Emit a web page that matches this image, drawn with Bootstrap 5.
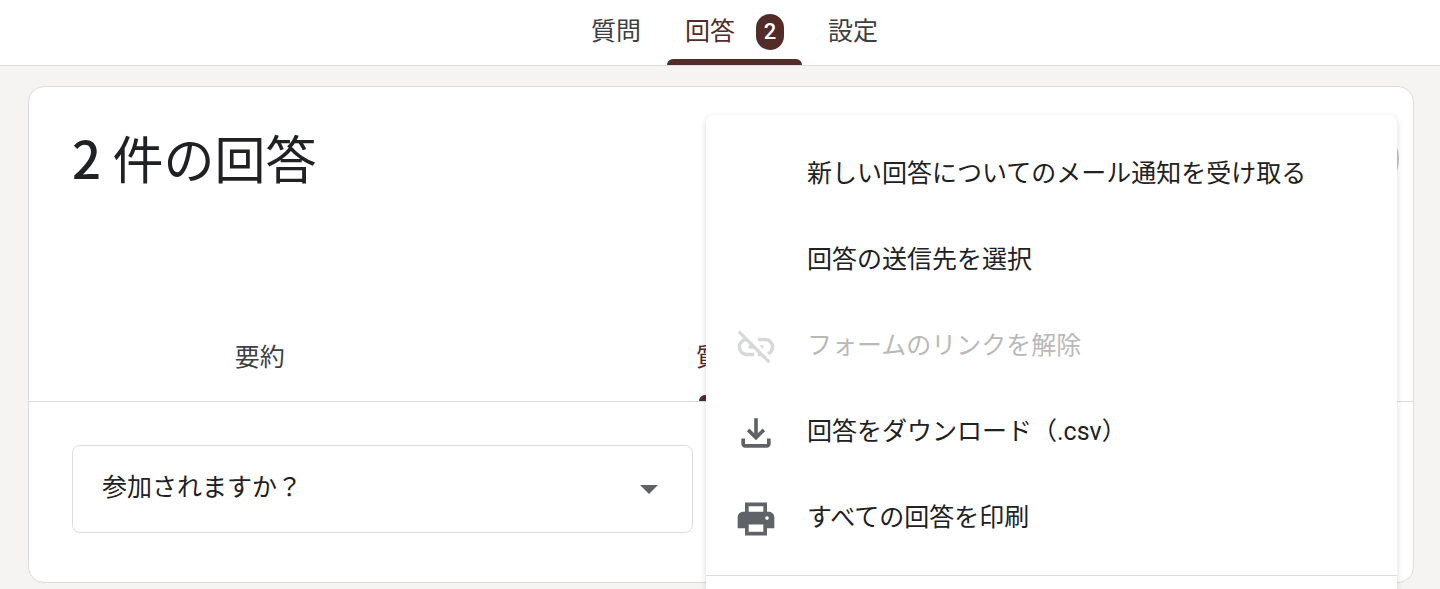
<!DOCTYPE html>
<html lang="ja">
<head>
<meta charset="utf-8">
<meta name="viewport" content="width=device-width, initial-scale=1">
<title>回答</title>
<link href="https://cdn.jsdelivr.net/npm/bootstrap@5.3.0/dist/css/bootstrap.min.css" rel="stylesheet">
<style>
  body { font-family: Roboto, "Noto Sans CJK JP", sans-serif; font-size: 25px; line-height: 36px; color: #202124; background: #f5f4f2; }
  .top-bar { background: #fff; border-bottom: 1px solid #dadce0; padding-left: 29px; }
  .top-tab { position: relative; height: 65px; padding: 14px 18px 15px; gap: 21px; color: #3c4043; background: none; border: 0; line-height: 34px; }
  .top-tab.active, .sub-tab.active { color: #522c29; }
  .top-tab.active::after, .sub-tab.active span::after { content: ""; position: absolute; left: 0; right: 0; bottom: 0; height: 6px; border-radius: 6px 6px 0 0; background: #522c29; }
  .count-pill { width: 28px; height: 36px; border-radius: 14px; background: #522c29; color: #fff; font-size: 22px; line-height: 36px; font-weight: 500; }
  .stage { position: relative; padding: 20px 26px 6px 28px; }
  .panel { background: #fff; border: 1px solid #dadce0; border-radius: 16px; }
  .panel-head { padding: 34px 14px 0 43px; margin-bottom: 118px; }
  .panel-title { font-family: "Noto Sans CJK JP", sans-serif; font-size: 51px; line-height: 72px; font-weight: 400; }
  .count-num { font-weight: 500; }
  .more-btn { width: 76px; height: 76px; background: #c2c2c2; border: 0; }
  .sub-tabs { border-bottom: 1px solid #dadce0; }
  .sub-tab { height: 86px; padding: 0; background: none; border: 0; color: #3c4043; }
  .sub-tab span { position: relative; display: inline-block; height: 86px; line-height: 86px; padding: 0 4px; }
  .sub-tab.active span::after { left: 7px; right: 7px; }
  .question-area { padding: 43px 43px 49px; }
  .question-pick { width: calc(50% - 28px); height: 88px; padding: 0 80px 2px 29px; font-size: 25px; color: #202124; border: 1px solid #dadce0; border-radius: 8px;
    background-image: url("data:image/svg+xml,%3Csvg xmlns='http://www.w3.org/2000/svg' viewBox='0 0 18 9'%3E%3Cpath d='M0 0h18l-9 9z' fill='%235f6368'/%3E%3C/svg%3E");
    background-size: 18px 9px; background-position: right 34px center; }
  .actions { display: block; position: absolute; top: 49px; right: 43px; width: 691px; padding: 17px 0 13px; border: 0; border-radius: 8px 8px 0 0; box-shadow: 0 2px 6px rgba(0,0,0,.15); font-size: 25px; color: #202124; background: #fff; }
  .actions .dropdown-item { display: flex; align-items: center; height: 86px; padding: 0 28px; gap: 29px; color: #202124; }
  .actions .dropdown-item span { padding-bottom: 2px; }
  .actions .dropdown-item:disabled { color: #b9b9b9; }
  .glyph { width: 44px; height: 44px; flex: none; fill: #5f6368; }
  :disabled .glyph { fill: #d7d8d9; }
  .actions .dropdown-divider { margin: 13px 0 0; border-color: #dadce0; opacity: 1; }
</style>
</head>
<body>
<header class="top-bar">
  <nav class="d-flex justify-content-center gap-2">
    <button type="button" class="top-tab d-flex align-items-center">質問</button>
    <button type="button" class="top-tab active d-flex align-items-center">回答<span class="count-pill text-center">2</span></button>
    <button type="button" class="top-tab d-flex align-items-center">設定</button>
  </nav>
</header>

<main class="stage">
  <section class="panel">
    <div class="panel-head d-flex justify-content-between">
      <h1 class="panel-title mb-0"><span class="count-num">2</span> 件の回答</h1>
      <button type="button" class="more-btn rounded-circle" aria-label="その他"></button>
    </div>
    <div class="sub-tabs row g-0">
      <button type="button" class="sub-tab col-4"><span>要約</span></button>
      <button type="button" class="sub-tab active col-4"><span>質問</span></button>
      <button type="button" class="sub-tab col-4"><span>個別</span></button>
    </div>
    <div class="question-area">
      <select class="form-select question-pick" aria-label="質問を選択">
        <option>参加されますか？</option>
      </select>
    </div>
  </section>

  <div class="actions dropdown-menu">
    <button type="button" class="dropdown-item"><i class="glyph"></i><span>新しい回答についてのメール通知を受け取る</span></button>
    <button type="button" class="dropdown-item"><i class="glyph"></i><span>回答の送信先を選択</span></button>
    <button type="button" class="dropdown-item" disabled>
      <svg class="glyph" viewBox="0 0 24 24" aria-hidden="true"><path d="M17 7h-4v1.9h4c1.71 0 3.1 1.39 3.1 3.1 0 1.43-.98 2.63-2.31 2.98l1.46 1.46C20.88 15.61 22 13.95 22 12c0-2.76-2.24-5-5-5zm-1 4h-2.19l2 2H16zM2 4.27l3.11 3.11C3.29 8.12 2 9.91 2 12c0 2.76 2.24 5 5 5h4v-1.9H7c-1.71 0-3.1-1.39-3.1-3.1 0-1.59 1.21-2.9 2.76-3.07L8.73 11H8v2h2.73L13 15.27V17h1.73l4.01 4L20 19.74 3.27 3z"/></svg>
      <span>フォームのリンクを解除</span>
    </button>
    <button type="button" class="dropdown-item">
      <svg class="glyph" viewBox="0 0 24 24" aria-hidden="true"><path d="M18 15v3H6v-3H4v3c0 1.1.9 2 2 2h12c1.1 0 2-.9 2-2v-3zM17 11l-1.41-1.41L13 12.17V4h-2v8.17L8.41 9.59 7 11l5 5z"/></svg>
      <span>回答をダウンロード（.csv）</span>
    </button>
    <button type="button" class="dropdown-item">
      <svg class="glyph" viewBox="0 0 24 24" aria-hidden="true"><path fill-rule="evenodd" d="M19 8h-1V3H6v5H5c-1.66 0-3 1.34-3 3v6h4v4h12v-4h4v-6c0-1.66-1.34-3-3-3zM8 5h8v3H8zm8 14H8v-4h8zm2-6.5a1 1 0 1 1 0-2 1 1 0 0 1 0 2z"/></svg>
      <span>すべての回答を印刷</span>
    </button>
    <hr class="dropdown-divider">
  </div>
</main>
<script src="https://cdn.jsdelivr.net/npm/bootstrap@5.3.0/dist/js/bootstrap.bundle.min.js"></script>
</body>
</html>
